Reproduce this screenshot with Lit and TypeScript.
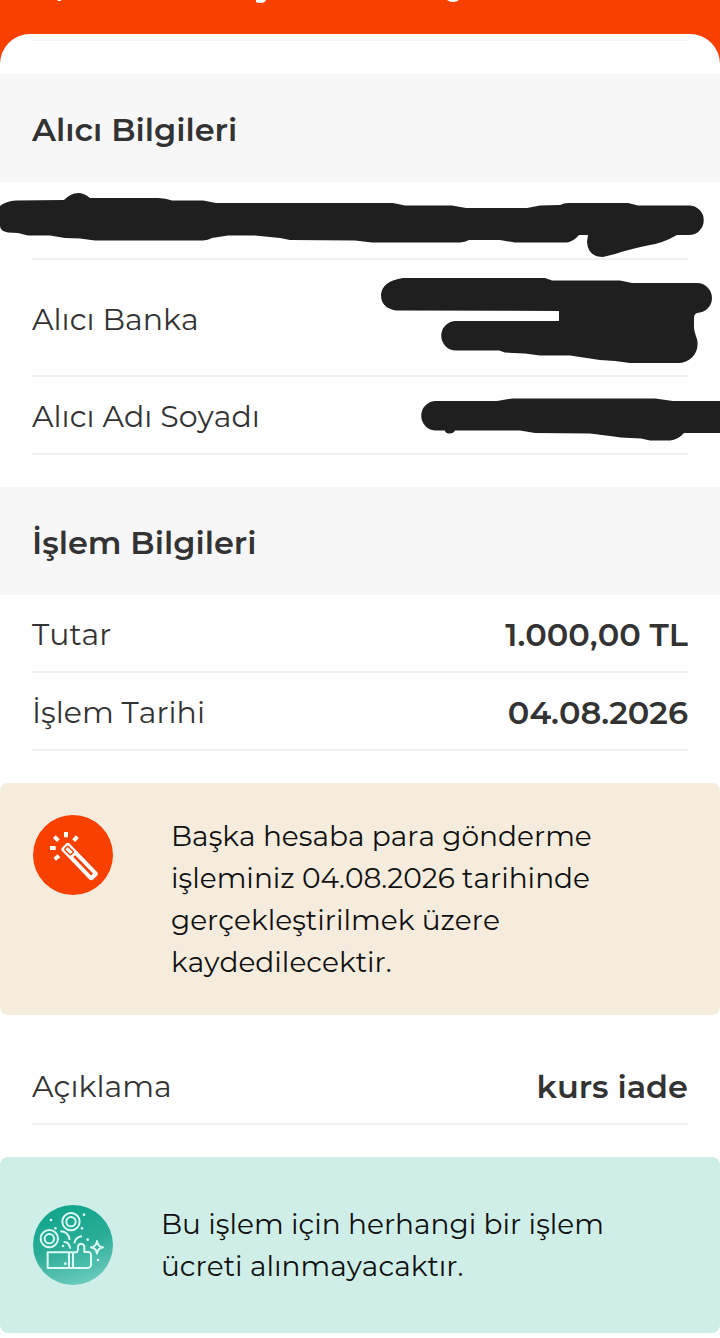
import { LitElement, html, css } from "lit";
import { customElement } from "lit/decorators.js";

const ink = "#1f1f1f";

const accountMask = html`<svg class="mask wide" viewBox="0 182 720 78" preserveAspectRatio="none" aria-hidden="true">
  <path fill=${ink} d="M0 206Q6 201 16 200.500L64 200Q77 187 90 198L158 198Q166 198 172 200.500L203 200.500L216 203L393 203L405 205.500L452 205.500L466 208L527 208L540 205.500L560 205Q564 203 568 203L628 203L638 205.500L689 205.500A14.750 14.750 0 0 1 689 235L677 235Q663 243 650 245Q630 249 615 254L603 257Q588 257 587 242L588 235L579 235Q573 242 567 242.500L515 242.500L500 240L469 240Q465 242 460 242.500L372 242.500L355 240.500L290 240L280 238L255 235.500L228 235.500L212 238Q208 240 203 240.500L95 240.500L80 238.500L65 238L50 235.500L28 235.500L18 233L8 232.500Q0 231 0 226Z"/>
</svg>`;

const bankMask = html`<svg class="mask" width="360" height="117" viewBox="360 260 360 117" aria-hidden="true">
  <path fill=${ink} d="M403 278L545 278L552 280.500L620 280.500L632 283L697 283A15 15 0 0 1 697 313Q694 314 694 318V327Q694 331 697 339C700 352 691 363 678 363L630 363L615 361L600 360L570 355.500L540 355.500L525 353.500L505 352.500L499 350.500L456 350.500A14.750 14.750 0 0 1 456 321L559 321V311L396 310.500Q381 308 381 295Q382 281 403 278Z"/>
</svg>`;

const nameMask = html`<svg class="mask" width="360" height="78" viewBox="360 377 360 78" aria-hidden="true">
  <path fill=${ink} d="M436 401L497 401L512 398.500L655 398.500L673 401L720 401V433L684 433Q678 440 670 440.500L650 440.500L641 438.500L621 437.500L610 436L590 433.500L535 433L520 430.500L455 430.500Q454 433.500 449 433.500Q445 433 445 430.500L436 430.500A14.750 14.750 0 0 1 436 401Z"/>
</svg>`;

const wandIcon = html`<svg class="icon" viewBox="39 45 240 240" aria-hidden="true">
  <circle cx="159" cy="165" r="120" fill="#f84000"/>
  <g transform="rotate(46 178 184)">
    <rect x="112" y="168" width="134" height="32" rx="9" fill="#fff"/>
    <rect x="121" y="177" width="25" height="14" rx="2" fill="none" stroke="#f84000" stroke-width="4"/>
    <rect x="156" y="180" width="77" height="8" fill="#f84000"/>
  </g>
  <g stroke="#fff" stroke-width="12">
    <path d="M138 96V112M90 144H107M103 110L115 122M172 110L161 122M104 178L117 167"/>
  </g>
</svg>`;

const giftIcon = html`<svg class="icon" viewBox="39 45 240 240" aria-hidden="true">
  <defs>
    <linearGradient id="teal" x1="0.3" y1="0" x2="0.6" y2="1">
      <stop offset="0" stop-color="#0fa58c"/>
      <stop offset="0.5" stop-color="#2aac97"/>
      <stop offset="1" stop-color="#6bcbbd"/>
    </linearGradient>
  </defs>
  <circle cx="159" cy="165" r="120" fill="url(#teal)"/>
  <g fill="none" stroke="#dcfbf5" stroke-width="6" stroke-linejoin="round">
    <circle cx="153" cy="95" r="26"/><circle cx="153" cy="95" r="14"/>
    <circle cx="88" cy="146" r="26"/><circle cx="88" cy="146" r="14"/>
    <path d="M121 124Q145 124 149 150M131 156Q147 155 151 176M163 160Q167 140 186 139"/>
    <path d="M83 187H170Q174 184 174 176V170Q175 161 184 161Q193 162 193 172V186H206Q213 187 213 194V225Q212 233 204 234H83ZM147 187V234M159 187V234"/>
    <path d="M231 153Q233 170 249 172Q233 175 231 191Q229 175 213 172Q229 170 231 153Z"/>
  </g>
  <g fill="#dcfbf5">
    <circle cx="93" cy="90" r="4"/><circle cx="192" cy="74" r="4"/><circle cx="106" cy="115" r="4"/>
    <circle cx="186" cy="115" r="4"/><circle cx="203" cy="149" r="4"/><circle cx="129" cy="168" r="4"/>
    <circle cx="136" cy="221" r="4"/><circle cx="234" cy="210" r="4"/>
  </g>
</svg>`;

@customElement("app-root")
export class AppRoot extends LitElement {
  static styles = css`
    :host {
      display: block;
      overflow: hidden;
      background: #fff;
      color: #333;
      font-family: Montserrat, Inter, "Noto Sans", sans-serif;
      font-size: 30px;
      line-height: 42px;
      font-weight: 400;
      font-kerning: none;
    }
    .top {
      background: #f84000;
    }
    .title-edge {
      display: block;
      height: 34px;
    }
    .sheet {
      height: 40px;
      box-sizing: border-box;
      padding: 6px 32px 0;
      background: #fff;
      border-radius: 30px 30px 0 0;
    }
    .rule {
      margin: 0;
      border: 0;
      border-top: 1px solid #f3f3f5;
    }
    h2 {
      margin: 0;
      padding: 35px 32px 31px;
      background: #f7f7f7;
      font-size: 32px;
      line-height: 42px;
      font-weight: 600;
    }
    dl {
      margin: 0 32px 32px;
    }
    .row {
      position: relative;
      display: flex;
      align-items: center;
      justify-content: space-between;
      box-sizing: border-box;
      min-height: 78px;
      padding-top: 4px;
      border-bottom: 2px solid #efefef;
    }
    .row.tall {
      min-height: 117px;
    }
    dd {
      margin: 0;
      font-size: 32px;
      font-weight: 600;
    }
    .mask {
      position: absolute;
      top: 0;
      right: -32px;
    }
    .mask.wide {
      width: calc(100% + 64px);
      height: 78px;
    }
    .notice {
      display: flex;
      align-items: flex-start;
      margin-bottom: 32px;
      padding: 32px 100px 32px 33px;
      gap: 58px;
      border-radius: 8px;
      background: #f6ecdd;
      color: #111;
      font-size: 28px;
    }
    .notice.free {
      align-items: center;
      margin-bottom: 0;
      padding: 46px 100px 46px 33px;
      gap: 48px;
      background: #d0eee8;
    }
    .notice p {
      margin: 0;
    }
    .icon {
      flex: none;
      width: 80px;
      height: 80px;
    }
  `;

  private row(label: string, value: unknown, tall = false) {
    return html`<div class="row ${tall ? "tall" : ""}"><dt>${label}</dt><dd>${value}</dd></div>`;
  }

  render() {
    return html`
      <header class="top">
        <svg class="title-edge" width="720" height="34" viewBox="0 0 720 34" aria-hidden="true">
          <path fill="#fff" d="M256 0H266Q265 3 261 3Q257 3 256 2ZM447 0H459Q457 2 453 2Q449 2 447 0ZM57 0H61V1H58Z"/>
        </svg>
        <div class="sheet"><hr class="rule" /></div>
      </header>
      <main>
        <section>
          <h2>Alıcı Bilgileri</h2>
          <dl>
            ${this.row("", accountMask)}
            ${this.row("Alıcı Banka", bankMask, true)}
            ${this.row("Alıcı Adı Soyadı", nameMask)}
          </dl>
        </section>
        <section>
          <h2>İşlem Bilgileri</h2>
          <dl>
            ${this.row("Tutar", "1.000,00 TL")}
            ${this.row("İşlem Tarihi", "04.08.2026")}
          </dl>
        </section>
        <div class="notice">
          ${wandIcon}
          <p>Başka hesaba para gönderme işleminiz 04.08.2026 tarihinde gerçekleştirilmek üzere kaydedilecektir.</p>
        </div>
        <dl>${this.row("Açıklama", "kurs iade")}</dl>
        <div class="notice free">
          ${giftIcon}
          <p>Bu işlem için herhangi bir işlem ücreti alınmayacaktır.</p>
        </div>
      </main>
    `;
  }
}
